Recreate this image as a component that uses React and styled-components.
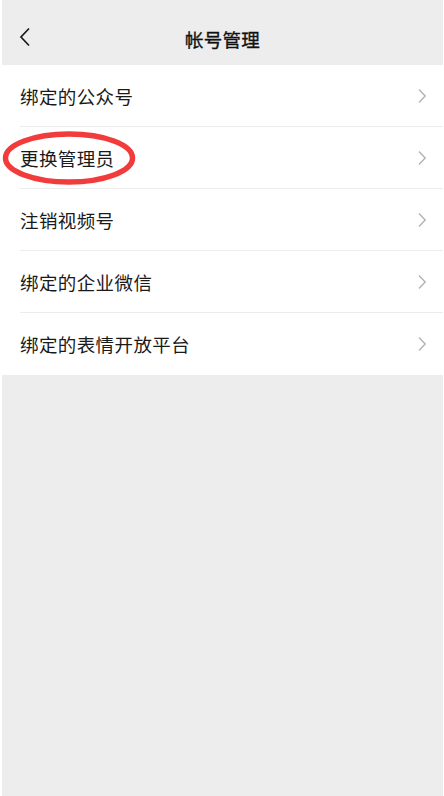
import React from "react";
import styled, { createGlobalStyle } from "styled-components";

const Global = createGlobalStyle`
  html, body {
    margin: 0;
    padding: 0;
    background: #ffffff;
  }
  body {
    font-family: "Noto Sans CJK SC", "Noto Sans", sans-serif;
  }
`;

const Screen = styled.div`
  width: 441px;
  height: 796px;
  margin-left: 2px;
  background: #ededed;
  display: flex;
  flex-direction: column;
`;

const NavBar = styled.div`
  height: 65px;
  padding-top: 12px;
  box-sizing: border-box;
  display: flex;
  align-items: center;
  justify-content: center;
  position: relative;
`;

const BackBtn = styled.div`
  position: absolute;
  left: 15px;
  top: 27px;
  width: 16px;
  height: 20px;
  display: flex;
  align-items: center;
  justify-content: center;
`;

const Title = styled.span`
  font-size: 18.5px;
  font-weight: 400;
  color: #111111;
  letter-spacing: 0.3px;
  -webkit-text-stroke: 0.35px #111111;
`;

const List = styled.div`
  background: #ffffff;
  display: flex;
  flex-direction: column;
`;

const Row = styled.div`
  height: 62px;
  padding-left: 18px;
  display: flex;
  align-items: center;
  position: relative;
`;

const RowInner = styled.div`
  flex: 1;
  height: 100%;
  display: flex;
  align-items: center;
  justify-content: space-between;
  padding-right: 16px;
  border-bottom: ${(p) => (p.last ? "none" : "1px solid #ececec")};
  box-sizing: border-box;
`;

const Label = styled.span`
  font-size: 18.5px;
  color: #1a1a1a;
  letter-spacing: 0.4px;
  position: relative;
  z-index: 1;
`;

const Circle = styled.svg`
  position: absolute;
  left: 0px;
  top: 4px;
  pointer-events: none;
`;

const Chevron = () => (
  <svg width="10" height="16" viewBox="0 0 10 16">
    <path d="M2 1.5 L8.2 8 L2 14.5" fill="none" stroke="#b3b3b3" strokeWidth="1.4" />
  </svg>
);

const items = [
  "绑定的公众号",
  "更换管理员",
  "注销视频号",
  "绑定的企业微信",
  "绑定的表情开放平台",
];

const App = () => {
  return (
    <Screen>
      <Global />
      <NavBar>
        <BackBtn>
          <svg width="14" height="20" viewBox="0 0 14 20">
            <path d="M11 1.5 L3 10 L11 18.5" fill="none" stroke="#1a1a1a" strokeWidth="1.7" />
          </svg>
        </BackBtn>
        <Title>帐号管理</Title>
      </NavBar>
      <List>
        {items.map((text, index) => (
          <Row key={index}>
            {index === 1 && (
              <Circle width="136" height="56" viewBox="0 0 136 56">
                <ellipse cx="67" cy="27" rx="63.5" ry="24" fill="none" stroke="#f23b3b" strokeWidth="5.5" />
              </Circle>
            )}
            <RowInner last={index === items.length - 1}>
              <Label>{text}</Label>
              <Chevron />
            </RowInner>
          </Row>
        ))}
      </List>
    </Screen>
  );
};

export default App;
